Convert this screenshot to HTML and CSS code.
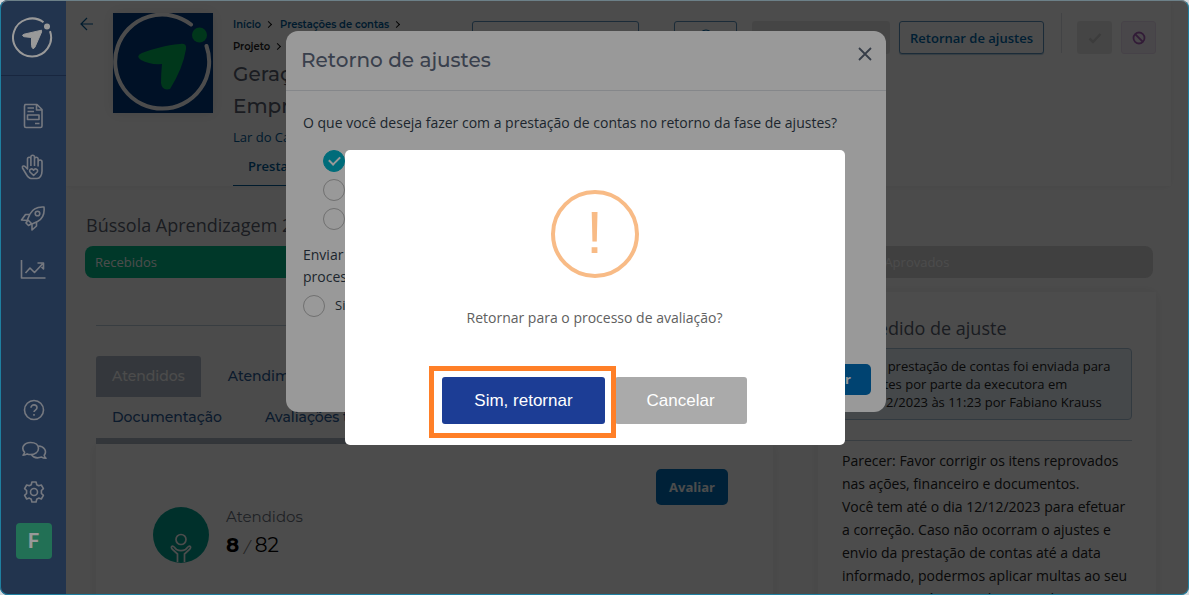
FILE: index.html
```html
<!DOCTYPE html>
<html lang="pt-BR">
<head>
  <meta charset="utf-8">
  <title>Prestações de contas</title>
  <link rel="stylesheet" href="styles.css">
</head>
<body>

<div class="app">

  <!-- Sidebar -->
  <nav class="sidebar">
    <a href="#" class="brand" aria-label="Início">
      <svg viewBox="0 0 42 42" width="42" height="42">
        <path d="M32.500 5.300A19 19 0 1 0 39 14.200" fill="none" stroke="#fff" stroke-width="2"/>
        <circle cx="36" cy="9.500" r="3" fill="#fff"/>
        <path d="M30.500 13.200 L13 17.200 Q10 18.300 13 19.700 L20.500 20.500 L20.500 28.500 Q21.500 34 24 30 L30.600 15Z" fill="#fff" stroke="#fff" stroke-width="1" stroke-linejoin="round"/>
      </svg>
    </a>
    <ul class="menu">
      <li><a href="#" aria-label="Projetos">
        <svg viewBox="0 0 26 26">
          <path d="M5 1.500h12l5 5v16.500a1.500 1.500 0 0 1-1.500 1.500h-14.500a1.500 1.500 0 0 1-1.500-1.500v-20a1.500 1.500 0 0 1 1.500-1.500zM16.500 2v5h5M7.500 5h6.500M7.500 8.500h6.500M7.500 12h11.500v4.500h-11.500zM15 20.500h4.500"/>
        </svg>
      </a></li>
      <li><a href="#" aria-label="Doações">
        <svg viewBox="0 0 26 26">
          <path d="M7.500 15v-10a1.700 1.700 0 0 1 3.400 0v7M10.900 12v-9a1.700 1.700 0 0 1 3.600 0v9M14.500 5a1.700 1.700 0 0 1 3.600 0v7.500M18.100 8a1.700 1.700 0 0 1 3.900 0v9c0 4-2 7.500-5 7.500h-6c-2.500 0-4-3-5.500-5.500l-3-5c-.6-2 1.500-2.700 2.800-1.300l2.700 2.800"/>
          <path d="M13.600 21.500l-3.600-3.500c-1.600-2.600 2-4.300 3.600-1.800 1.600-2.500 5.200-.8 3.600 1.800z"/>
        </svg>
      </a></li>
      <li><a href="#" aria-label="Metas">
        <svg viewBox="0 0 26 26">
          <path d="M24 2c-7-.5-11.500 2-14 7l-2.500 5.500 4.500 4.500 5.500-2.500c5-2.700 7.300-7.500 6.500-14.500zM9.500 9.500h-4l-4 5.500 6 .5M16.500 17v4l-4.500 4v-6M8 15l-2 3 2.500 2.500 3-1.800"/>
          <circle cx="17.500" cy="8.500" r="2.300"/>
        </svg>
      </a></li>
      <li><a href="#" aria-label="Relatórios">
        <svg viewBox="0 0 26 26">
          <path d="M1.500 4v18h24M5.500 17l4.500-5 4.500 4.500 8-8.500M17.500 7h6v6l-2-2"/>
        </svg>
      </a></li>
    </ul>
    <ul class="menu-bottom">
      <li><a href="#" aria-label="Ajuda">
        <svg viewBox="0 0 26 26">
          <circle cx="13" cy="13" r="9.500"/>
          <path d="M10 10.800c0-4 6-3.800 6 0 0 2.300-3 2.200-3 4.200M13 17v1.800"/>
        </svg>
      </a></li>
      <li><a href="#" aria-label="Mensagens">
        <svg viewBox="0 0 26 26">
          <path d="M9.500 4.500c5 0 8 2.500 8 6s-3.500 6-8 6c-1.200 0-2.300-.2-3.300-.6-1.300.9-2.700 1.300-4.200 1.300 1-1 1.500-2 1.600-3-4-4.200-.6-9.700 5.900-9.700z"/>
          <path d="M17.500 8c5.500.2 8.900 5 5.700 9.300.2 1.200.9 2.200 1.800 3-1.700.1-3.200-.4-4.400-1.200-4.200 1.300-8.400.4-10.200-2.500"/>
        </svg>
      </a></li>
      <li><a href="#" aria-label="Configurações">
        <svg viewBox="0 0 26 26">
          <path d="M10.900 3h4.200l.6 2.700 2 1.100 2.600-.8 2.100 3.600-2 1.900v2.900l2 1.900-2.100 3.700-2.600-.9-2 1.200-.6 2.700h-4.200l-.6-2.700-2-1.200-2.600.9-2.100-3.700 2-1.900v-2.900l-2-1.900 2.100-3.600 2.600.8 2-1.100z"/>
          <circle cx="13" cy="13" r="3.500"/>
        </svg>
      </a></li>
      <li><a href="#" class="avatar">F</a></li>
    </ul>
  </nav>

  <main class="page">

    <!-- Project header -->
    <header class="header">
      <a href="#" class="back" aria-label="Voltar">
        <svg viewBox="0 0 14 14" width="14" height="14"><path d="M13 7H1.500M7 1L1 7l6 6" fill="none" stroke="currentColor" stroke-width="1.200"/></svg>
      </a>
      <svg class="project-logo" viewBox="0 0 100 100" width="100" height="100">
        <path d="M0 0h100v100H0z" fill="#003a80"/>
        <path d="M78 11.500A47 47 0 1 0 93.500 33" fill="none" stroke="#fff" stroke-width="4" stroke-linecap="round"/>
        <circle cx="86.500" cy="22" r="7.500" fill="#00b95c"/>
        <path d="M67 31 C53 32 40 36 29 40 Q22 43 28 47 Q37 52 49 51 Q48 61 48 70 Q49 78 57 76 Q70 55 73 36 Q74 30 67 31Z" fill="#00b95c"/>
      </svg>

      <div class="project">
        <ol class="crumbs">
          <li><a href="#">Início</a></li>
          <li><a href="#">Prestações de contas</a></li>
          <li>Projeto</li>
        </ol>
        <h1>Geração Empreendedora</h1>
        <a href="#" class="org">Lar do Caminho</a>
        <div class="project-tabs"><a href="#">Prestação</a></div>
      </div>

      <div class="actions">
        <button class="btn-outline wide" aria-label="Relatório"></button>
        <button class="btn-outline icon" aria-label="Ver">
          <svg viewBox="0 0 16 16" width="16" height="16"><circle cx="8" cy="8" r="6" fill="none" stroke="currentColor" stroke-width="1.200"/></svg>
        </button>
        <button class="btn-disabled wide2" disabled aria-label="Enviar"></button>
        <button class="btn-outline">Retornar de ajustes</button>
        <span class="separator"></span>
        <button class="btn-disabled small" disabled aria-label="Aprovar">
          <svg viewBox="0 0 14 12" width="14" height="12"><path d="M1.500 6.500l3.500 3.500L12.500 2" fill="none" stroke="#c8c8c8" stroke-width="2.500"/></svg>
        </button>
        <button class="btn-ban small" aria-label="Reprovar">
          <svg viewBox="0 0 14 14" width="14" height="14"><path d="M3 3l8 8" stroke="#a860bb" stroke-width="1.800"/><circle cx="7" cy="7" r="5.500" fill="none" stroke="#a860bb" stroke-width="1.800"/></svg>
        </button>
      </div>
    </header>

    <section class="content">
      <h2 class="section-title">Bússola Aprendizagem 2023</h2>
      <div class="steps">
        <span class="step done">Recebidos</span>
        <span class="step">Aprovados</span>
      </div>

      <div class="columns">
        <div class="left">
          <hr>
          <div class="tabs">
            <div class="tab-row">
              <a href="#" class="tab active">Atendidos</a>
              <a href="#" class="tab">Atendimentos</a>
            </div>
            <div class="tab-row">
              <a href="#" class="tab">Documentação</a>
              <a href="#" class="tab">Avaliações técnicas</a>
            </div>
          </div>
          <div class="card">
            <button class="btn-primary">Avaliar</button>
            <div class="metric">
              <svg class="metric-icon" viewBox="0 0 56 56" width="56" height="56">
                <circle cx="28" cy="28" r="28" fill="#00a393"/>
                <path d="M24.500 55v-8l-5-4.500c-1.500-2-1.500-3 0-3.500 1.500 0 2 2 4 3.500 3 1.500 6 1.500 9 0 2-1.500 2.500-3.500 4-3.500 1.500.5 1.500 1.500 0 3.500l-5 4.500v8" fill="none" stroke="#fff" stroke-width="1.700"/>
                <circle cx="28" cy="32.500" r="5" fill="none" stroke="#fff" stroke-width="1.700"/>
              </svg>
              <div>
                <div class="metric-label">Atendidos</div>
                <div class="metric-value"><b>8</b> <i>/</i> 82</div>
              </div>
            </div>
          </div>
        </div>

        <aside class="request">
          <h2>Pedido de ajuste</h2>
          <p class="notice">Esta prestação de contas foi enviada para ajustes por parte da executora em 04/12/2023 às 11:23 por Fabiano Krauss</p>
          <hr>
          <p class="opinion">Parecer: Favor corrigir os itens reprovados nas ações, financeiro e documentos.<br>Você tem até o dia 12/12/2023 para efetuar a correção. Caso não ocorram o ajustes e envio da prestação de contas até a data informado, podermos aplicar multas ao seu projeto ou até o cancelamento do contrato.</p>
        </aside>
      </div>
    </section>
  </main>

  <!-- Modal: return from adjustments -->
  <div class="backdrop">
    <div class="modal" role="dialog" aria-labelledby="modalTitle">
      <div class="modal-header">
        <h2 id="modalTitle">Retorno de ajustes</h2>
        <button class="close" aria-label="Fechar">
          <svg viewBox="0 0 14 14" width="14" height="14"><path d="M1 1l12 12M13 1L1 13" stroke="currentColor" stroke-width="1.800"/></svg>
        </button>
      </div>
      <div class="modal-body">
        <p>O que você deseja fazer com a prestação de contas no retorno da fase de ajustes?</p>
        <div class="choices">
          <input type="radio" name="destino" aria-label="Retornar para avaliação" checked>
          <input type="radio" name="destino" aria-label="Aprovar">
          <input type="radio" name="destino" aria-label="Reprovar">
        </div>
        <p>Enviar<br>processo</p>
        <label class="yes"><input type="radio" name="enviar"> Sim</label>
      </div>
      <div class="modal-footer">
        <button class="btn-primary">Confirmar</button>
      </div>
    </div>
  </div>
</div>

<!-- Confirmation -->
<div class="confirm-overlay">
  <div class="confirm" role="alertdialog" aria-labelledby="confirmText">
    <div class="confirm-icon">!</div>
    <p id="confirmText">Retornar para o processo de avaliação?</p>
    <div class="confirm-buttons">
      <span class="highlight"><button class="yes-btn">Sim, retornar</button></span>
      <button class="cancel-btn">Cancelar</button>
    </div>
  </div>
</div>

</body>
</html>
```
FILE: styles.css
```css
* {
  box-sizing: border-box;
}

body {
  margin: 0;
  height: 100vh;
  overflow: hidden;
  background: #d5dbdf;
  font-family: "Open Sans", "Noto Sans", sans-serif;
  font-size: 14px;
  color: #222;
}

h1, h2, p, ul, ol {
  margin: 0;
  padding: 0;
  font-weight: 400;
}

ul, ol {
  list-style: none;
}

a {
  text-decoration: none;
  color: #005c99;
}

button {
  font-family: inherit;
}

.app {
  display: flex;
  position: relative;
  height: 100vh;
  background: #fdfdfd;
  border-radius: 8px;
  overflow: hidden;
}

/* sidebar */
.sidebar {
  position: relative;
  z-index: 3;
  display: flex;
  flex-direction: column;
  width: 66px;
  background: #3a5782;
}

.brand {
  display: flex;
  justify-content: center;
  padding: 17px 2px 16px 0;
  border-bottom: 1px solid #28406a;
}

.menu {
  display: flex;
  flex-direction: column;
  align-items: center;
  gap: 25px;
  padding-top: 27px;
}

.menu-bottom {
  display: flex;
  flex-direction: column;
  align-items: center;
  gap: 15px;
  margin-top: auto;
  padding: 0 0 36px 1px;
}

.sidebar li a {
  display: block;
}

.sidebar li svg {
  display: block;
  width: 26px;
  height: 26px;
  fill: none;
  stroke: #c3c9d5;
  stroke-width: 1.6;
  stroke-linejoin: round;
}

.menu-bottom .avatar {
  width: 36px;
  height: 36px;
  margin-top: 3px;
  border-radius: 4px;
  background: #3abb8e;
  color: #fff;
  font: 700 20px/36px Roboto, sans-serif;
  text-align: center;
}

/* header */
.page {
  flex: 1;
  min-width: 0;
}

.header {
  display: flex;
  margin-right: 18px;
  height: 186px;
  padding: 13px 15px 0 14px;
  background: #fff;
  box-shadow: 0 1px 8px rgba(0, 0, 0, 0.06);
}

.back {
  width: 33px;
  padding-top: 3px;
}

.project-logo {
  margin-right: 20px;
  box-shadow: 0 0 12px rgba(0, 0, 0, 0.1);
}

.project {
  display: flex;
  flex-direction: column;
  width: 222px;
}

.crumbs {
  display: flex;
  flex-wrap: wrap;
  padding-top: 1px;
  font: 600 10px/22px Montserrat, Inter, sans-serif;
}

.crumbs li::after {
  content: "";
  display: inline-block;
  width: 4px;
  height: 4px;
  margin: 0 9px 1px 5px;
  border: solid #111;
  border-width: 1px 1px 0 0;
  transform: rotate(45deg);
}

.project h1 {
  font: 500 20px/32px Montserrat, Inter, sans-serif;
  color: #59616f;
}

.org {
  font-size: 13px;
  line-height: 31px;
}

.project-tabs {
  padding: 3px 15px 9px;
  border-bottom: 1px solid #005c99;
  line-height: 20px;
}

.project-tabs a {
  font-size: 13px;
  font-weight: 600;
}

.actions {
  display: flex;
  align-items: flex-start;
  margin-left: auto;
  padding-top: 8px;
  gap: 9px;
}

.btn-outline {
  height: 33px;
  padding: 0 10px;
  border: 1px solid #5b93bd;
  border-radius: 3px;
  background: #fff;
  color: #0069ac;
  font-size: 13px;
  font-weight: 600;
  box-shadow: 0 1px 1px rgba(0, 90, 160, 0.3);
}

.wide {
  width: 167px;
  margin-right: 26px;
}

.icon {
  width: 63px;
  margin-right: 6px;
}

.btn-disabled {
  height: 33px;
  border: 0;
  border-radius: 3px;
  background: #e9e9e9;
}

.wide2 {
  width: 138px;
}

.separator {
  width: 1px;
  height: 40px;
  margin: -8px 6px 0 8px;
  background: #dde3e8;
}

.small {
  display: flex;
  align-items: center;
  justify-content: center;
  width: 35px;
  padding: 0;
}

.btn-ban {
  height: 33px;
  border: 1px solid #ecdff0;
  border-radius: 3px;
  background: #f6eff8;
}

/* content */
.content {
  padding: 25px 33px 0 19px;
}

.section-title,
.request h2 {
  font-size: 18px;
  line-height: 28px;
  color: #59616f;
}

.section-title {
  padding-left: 1px;
}

.steps {
  display: grid;
  grid-template-columns: 17fr 6fr;
  margin: 7px 3px 0 0;
  border-radius: 8px;
  overflow: hidden;
}

.step {
  padding: 0 10px;
  background: #d6d6d6;
  color: #fff;
  font-size: 13px;
  line-height: 32px;
}

.step.done {
  background: #00bd8b;
}

.columns {
  display: flex;
  gap: 45px;
}

hr {
  margin: 0;
  border: 0;
  border-top: 1px solid #bccfda;
}

.left {
  flex: 1;
  padding: 47px 0 0 11px;
}

.tabs {
  margin-top: 30px;
  border-bottom: 6px solid #b0bac8;
}

.tab-row {
  display: flex;
  gap: 11px;
}

.tab {
  padding: 0 16px;
  color: #2a5c96;
  font: 500 14px/41px Montserrat, Inter, sans-serif;
}

.tab.active {
  border-radius: 3px 3px 0 0;
  background: #b0bac8;
  color: #fff;
}

.card {
  display: flex;
  flex-direction: column;
  height: 180px;
  padding: 25px 45px 0 57px;
  background: #fff;
  box-shadow: 0 0 14px rgba(0, 0, 0, 0.08);
}

.btn-primary {
  align-self: flex-end;
  padding: 0 14px;
  border: 0;
  border-radius: 5px;
  background: #0071bc;
  color: #fff;
  font-size: 13px;
  font-weight: 700;
  line-height: 36px;
}

.card .btn-primary {
  padding: 0 13px;
}

.metric {
  display: flex;
  gap: 17px;
}

.metric-icon {
  margin-top: 2px;
}

.metric-label {
  color: #6a717d;
  font: 400 15px/24px Montserrat, Inter, sans-serif;
}

.metric-value {
  color: #000;
  font: 400 20px/32px Montserrat, Inter, sans-serif;
}

.metric-value b {
  font-weight: 700;
}

.metric-value i {
  font-size: 15px;
  color: #777;
}

.request {
  width: 338px;
  height: 360px;
  margin-top: 14px;
  padding: 22px 24px 0;
  background: #fff;
  box-shadow: 0 0 14px rgba(0, 0, 0, 0.08);
}

.request h2 {
  padding-left: 25px;
}

.notice {
  margin: 6px 0 20px;
  padding: 8px 10px 8px 16px;
  border: 1px solid #a9c2d6;
  border-radius: 4px;
  background: #e9f2f8;
  font-size: 13px;
  line-height: 18px;
}

.opinion {
  padding-top: 8px;
  line-height: 23px;
}

/* modal */
.backdrop {
  position: absolute;
  inset: 0;
  z-index: 2;
  padding: 31px 17px 0 0;
  background: rgba(0, 0, 0, 0.5);
}

.modal {
  max-width: 600px;
  margin: 0 auto;
  border-radius: 12px;
  background: #fff;
  color: #333f4d;
}

.modal-header {
  display: flex;
  justify-content: space-between;
  align-items: flex-start;
  padding: 13px 14px 14px 15px;
  border-bottom: 1px solid #dee2e6;
}

.modal-header h2 {
  color: #5f6b80;
  font: 500 20px/32px Montserrat, Inter, sans-serif;
}

.close {
  padding: 3px 0 0;
  border: 0;
  background: none;
  color: #5b6679;
}

.modal-body {
  padding: 21px 17px 0;
  line-height: 22px;
}

.choices {
  display: flex;
  flex-direction: column;
  gap: 7px;
  padding: 16px 0 14px 20px;
}

input[type="radio"] {
  appearance: none;
  width: 22px;
  height: 22px;
  margin: 0;
  border: 1px solid #bbb;
  border-radius: 50%;
  background: #fff;
}

input[type="radio"]:checked {
  display: flex;
  align-items: center;
  justify-content: center;
  border-color: #00b5cc;
  background: #00b5cc;
}

input[type="radio"]:checked::before {
  content: "";
  width: 9px;
  height: 5px;
  margin-bottom: 3px;
  border: solid #fff;
  border-width: 0 0 2px 2px;
  transform: rotate(-45deg);
}

.yes {
  display: flex;
  gap: 10px;
  padding-top: 7px;
  font-size: 13px;
  line-height: 20px;
}

.modal-footer {
  display: flex;
  justify-content: flex-end;
  padding: 47px 15px 17px;
}

.modal-footer .btn-primary {
  line-height: 31px;
  padding: 0 20px;
}

/* confirmation */
.confirm-overlay {
  position: fixed;
  inset: 0;
  z-index: 10;
  display: flex;
  align-items: center;
  justify-content: center;
  border: 1px solid #1f7fa0;
  border-top-color: #6c8088;
  border-radius: 8px;
  background: rgba(0, 0, 0, 0.4);
}

.confirm {
  width: 500px;
  padding: 40px 20px 21px;
  border-radius: 5px;
  background: #fff;
  text-align: center;
}

.confirm-icon {
  width: 88px;
  height: 88px;
  margin: 0 auto;
  border: 4px solid #f8bb86;
  border-radius: 50%;
  color: #f8bb86;
  font: 400 60px/78px "Liberation Sans", Arial, sans-serif;
}

.confirm p {
  padding: 29px 0 48px;
  color: #606060;
  line-height: 22px;
}

.confirm-buttons {
  display: flex;
  justify-content: center;
  gap: 10px;
}

.confirm-buttons button {
  display: block;
  height: 47px;
  padding: 0 32px;
  border: 0;
  border-radius: 3px;
  color: #fff;
  font: 400 17px "Liberation Sans", Arial, sans-serif;
}

.highlight {
  position: relative;
}

/* orange frame around the confirm button, drawn over its neighbour */
.highlight::after {
  content: "";
  position: absolute;
  inset: -11px -11px -14px -13px;
  border: 5px solid #ff7f27;
  pointer-events: none;
}

.confirm-buttons .yes-btn {
  background: #1c3d95;
}

.confirm-buttons .cancel-btn {
  background: #aaa;
}
```
